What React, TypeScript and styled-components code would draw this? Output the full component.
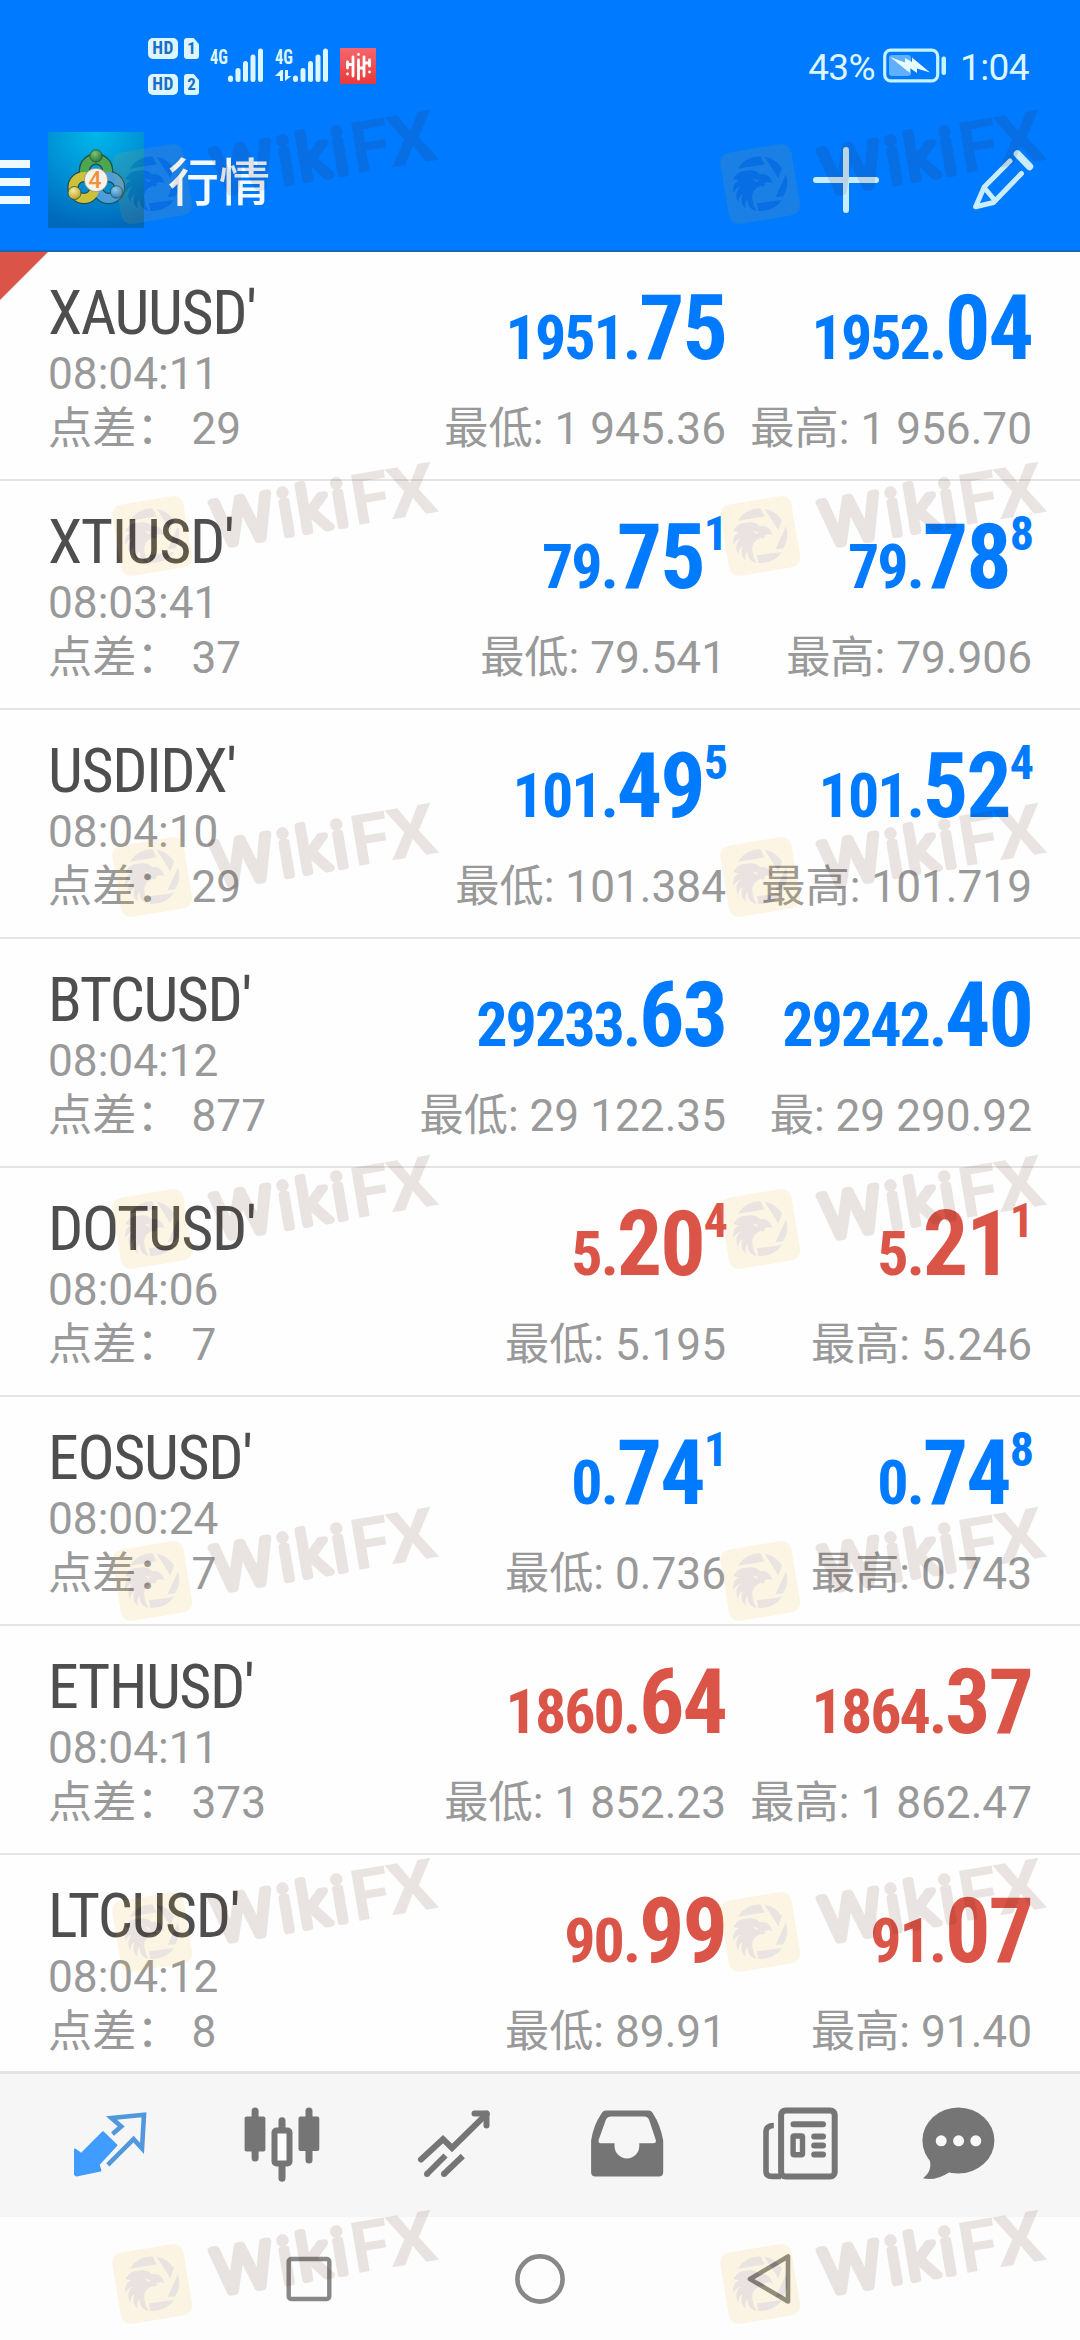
import React from 'react';
import styled, { createGlobalStyle } from 'styled-components';

const BLUE = '#007aff';
const RED = '#da5548';
const ICE = '#dcf6ff';
const GREY = '#757575';

const GlobalStyle = createGlobalStyle`
  * { box-sizing: border-box; }
  body { margin: 0; background: #fdfdfd; }
  svg { display: block; flex: none; }
`;

const Screen = styled.div`
  position: relative;
  width: 1080px;
  height: 2340px;
  overflow: hidden;
  display: flex;
  flex-direction: column;
  background: #fefefe;
  font-family: Roboto, 'Noto Sans CJK SC', sans-serif;
`;

/* ---------- header ---------- */

const Header = styled.header`
  flex: none;
  height: 252px;
  background: ${BLUE};
  border-bottom: 2px solid #1668b8;
`;

const StatusBar = styled.div`
  height: 132px;
  padding: 0 51px 0 148px;
  display: flex;
  align-items: center;
  justify-content: space-between;
  color: ${ICE};
`;

const StatusGroup = styled.div<{ $gap: number }>`
  display: flex;
  align-items: center;
  gap: ${p => p.$gap}px;
`;

const SimList = styled.div`
  display: grid;
  gap: 15px;
  padding-top: 1px;
`;

const SimLine = styled.div`
  display: flex;
  align-items: center;
  gap: 6px;
`;

const HdBadge = styled.span`
  width: 30px;
  height: 21px;
  border-radius: 5px;
  background: ${ICE};
  color: #1a70c4;
  font: 700 17.5px/21px 'Roboto Condensed', Roboto, sans-serif;
  letter-spacing: 0.5px;
  text-align: center;
`;

const SimBadge = styled.span`
  width: 15px;
  height: 21px;
  border-radius: 3px;
  clip-path: polygon(0 0, 65% 0, 100% 30%, 100% 100%, 0 100%);
  background: ${ICE};
  color: #1a70c4;
  font: 700 17px/21px 'Roboto Condensed', Roboto, sans-serif;
  text-align: center;
`;

const StatusText = styled.span<{ $before?: number }>`
  margin-left: ${p => p.$before || 0}px;
  padding-top: 4px;
  font-size: 37px;
  line-height: 44px;
  letter-spacing: -0.6px;
`;

const Toolbar = styled.div`
  height: 96px;
  padding-right: 44px;
  display: flex;
  align-items: center;
`;

const MenuIcon = styled.div`
  width: 30px;
  margin-right: 18px;
  padding-top: 4px;
  display: grid;
  gap: 10px;
`;

const MenuBar = styled.span`
  height: 8px;
  background: #eefaff;
`;

const Title = styled.h1`
  flex: 1;
  margin: 0 0 0 24px;
  padding-top: 8px;
  color: #f4fbff;
  font-size: 51px;
  line-height: 60px;
  font-weight: 500;
`;

const Actions = styled.div`
  display: flex;
  align-items: center;
  gap: 91px;
`;

/* ---------- quotes ---------- */

const QuoteList = styled.main`
  flex: none;
  height: 1819px;
  overflow: hidden;
`;

const Row = styled.section`
  position: relative;
  height: 229px;
  padding: 28px 48px 0;
  display: grid;
  grid-template-columns: 1fr auto 306px;
  border-bottom: 2px solid #e4e4e4;
`;

const Corner = styled.span`
  position: absolute;
  left: 0;
  top: 0;
  width: 48px;
  height: 48px;
  background: ${RED};
  clip-path: polygon(0 0, 100% 0, 0 100%);
`;

const Column = styled.div<{ $end?: boolean }>`
  display: flex;
  flex-direction: column;
  align-items: ${p => (p.$end ? 'flex-end' : 'flex-start')};
`;

const SymbolName = styled.div`
  margin-bottom: 2px;
  color: #4e4e4e;
  font-family: 'Roboto Condensed', Roboto, sans-serif;
  font-size: 62px;
  line-height: 65px;
  letter-spacing: -1.4px;
`;

const Note = styled.div`
  color: #999;
  font-size: 44.2px;
  line-height: 55px;
  white-space: pre;
`;

const Price = styled.div<{ $color: string }>`
  height: 122px;
  padding-top: 1px;
  color: ${p => p.$color};
  font-family: 'Roboto Condensed', Roboto, sans-serif;
  font-weight: 700;
  font-size: 90px;
  line-height: 95px;
  letter-spacing: -0.022em;
  white-space: nowrap;
`;

const Whole = styled.span`
  font-size: 62px;
`;

const Pip = styled.span`
  font-size: 48px;
  line-height: 0;
  vertical-align: 38px;
`;

/* ---------- bottom bars ---------- */

const TabBar = styled.nav`
  flex: none;
  height: 146px;
  padding-left: 24px;
  display: grid;
  grid-template-columns: 172px 171px 173px 173px 175px 139px;
  align-items: center;
  justify-items: center;
  background: #f6f6f6;
  border-top: 3px solid #e2e2e2;
`;

const NavBar = styled.div`
  flex: none;
  height: 123px;
  padding-left: 194px;
  display: grid;
  grid-template-columns: 230px 232px 225px;
  align-items: center;
  justify-items: center;
  background: #fdfdfd;
`;

/* ---------- watermark ---------- */

const MarkLayer = styled.div`
  position: absolute;
  inset: 86px 0 0 100px;
  display: grid;
  grid-template-columns: 608px 340px;
  grid-template-rows: 352px 341px 352px 352px 351px 352px 140px;
  pointer-events: none;
`;

function Mark() {
  return (
    <svg width="340" height="140" viewBox="0 0 340 140" opacity="0.11">
      <rect x="16.2" y="62" width="72" height="72" rx="10" fill="#f0af1e" transform="rotate(-9.5 52.2 98)" />
      <g transform="translate(0 33.7) scale(0.33333)" fill="#461909">
        <path d="M89 147 A82 82 0 0 1 157 110 L170 134 Z" />
        <path d="M170 111 A82 82 0 0 1 222 146 L211 176 Z" />
        <path d="M234 164 A82 82 0 0 1 226 230 L203 232 Z" />
        <path d="M222 241 A82 82 0 0 1 151 274 L147 251 Z" />
        <path d="M76 178 C84 162 98 152 116 153 C134 150 148 154 155 164 C172 160 188 168 193 191 C186 186 178 187 168 190 C174 196 168 202 158 200 C142 204 132 216 133 234 C134 250 138 262 146 274 C126 270 117 254 119 236 C112 246 110 258 114 266 C100 258 97 240 104 222 C94 230 90 240 92 248 C80 234 84 214 98 200 C88 204 80 212 77 220 C72 204 78 190 92 182 Z" />
      </g>
      <path d="M44.5 59.5 L50 61 L49 63.2 Z" transform="translate(0 33)" fill="#f0af1e" />
      <g transform="rotate(-9.5)" fill="#461909" stroke="#461909" fontFamily="Roboto">
        <g fontSize="62" fontWeight="300" strokeWidth="7.5" strokeLinejoin="round" strokeLinecap="round">
          <text x="97.5" y="126" textLength="60" lengthAdjust="spacingAndGlyphs">W</text>
          <text x="164" y="126">i</text>
          <text x="183" y="126">k</text>
          <text x="218.5" y="126">i</text>
        </g>
        <g fontSize="71" fontWeight="700" stroke="none">
          <text x="237" y="128.5">F</text>
          <text x="274" y="128.5" textLength="49" lengthAdjust="spacingAndGlyphs">X</text>
        </g>
      </g>
    </svg>
  );
}

/* ---------- status icons ---------- */

const BARS = [
  [2.5, 29.5],
  [10, 22],
  [17.5, 15],
  [25, 8.5],
  [32.5, 2.5],
];

function Signal({ data }: { data?: boolean }) {
  return (
    <svg width="54" height="36" viewBox="0 0 54 36" fill={ICE}>
      <text x="0" y="16" fontFamily="'Roboto Condensed', Roboto" fontWeight="700" fontSize="20" textLength="18" lengthAdjust="spacingAndGlyphs">
        4G
      </text>
      {BARS.map(([x, y]) => (
        <line key={x} x1={x + 18} x2={x + 18} y1={y + 0.5} y2={31.5} stroke={ICE} strokeWidth="5" strokeLinecap="round" />
      ))}
      {data && <path d="M5 22 V33 H8 V22 H6 L0 28 H5 Z M10 22 V33 L16.5 28 H13 V22 Z" />}
    </svg>
  );
}

function HihIcon() {
  return (
    <svg width="36" height="36" viewBox="0 0 36 36">
      <defs>
        <linearGradient id="hih" x1="0" y1="0" x2="0" y2="1">
          <stop offset="0" stopColor="#f5666c" />
          <stop offset="1" stopColor="#e73a3c" />
        </linearGradient>
      </defs>
      <rect width="36" height="36" fill="url(#hih)" />
      <g stroke="#fff" strokeWidth="2.8" strokeLinecap="round" fill="none">
        <path d="M7.5 14 V20 M7.5 16.5 H13 M13 9 V28 M18.5 6.5 V6.6 M18.5 12 V31 M18.5 20 H24 M24 9 V28 M24 15 H29.5 M29.5 12 V18 M7.5 26 V26.1 M29.5 24 V24.1" />
      </g>
    </svg>
  );
}

function Battery() {
  return (
    <svg width="64" height="36" viewBox="0 0 64 36">
      <rect x="1.7" y="2.2" width="53" height="30.6" rx="6" fill="none" stroke="#c5f4ff" strokeWidth="3.2" />
      <rect x="6" y="7" width="22" height="21" rx="3" fill="#5fb0ff" />
      <path d="M7 9 L22 14.5 V10 L29 14 V9.5 L47 24.5 L34 20.5 V25 L27 20 V25 Z" fill="#e8fbff" />
      <rect x="58.5" y="8.5" width="4.5" height="18.5" rx="2" fill="#c5f4ff" />
    </svg>
  );
}

function AppIcon() {
  return (
    <svg width="96" height="96" viewBox="0 0 96 96">
      <defs>
        <radialGradient id="sky" cx="0.5" cy="0" r="1">
          <stop offset="0" stopColor="#00b8ea" />
          <stop offset="0.55" stopColor="#008fd4" />
          <stop offset="1" stopColor="#0069bb" />
        </radialGradient>
        <radialGradient id="gHead" cx="0.4" cy="0.3" r="0.8">
          <stop offset="0" stopColor="#7cc470" />
          <stop offset="1" stopColor="#1a6e34" />
        </radialGradient>
        <radialGradient id="yHead" cx="0.4" cy="0.3" r="0.8">
          <stop offset="0" stopColor="#f6ee9a" />
          <stop offset="1" stopColor="#b49718" />
        </radialGradient>
        <radialGradient id="bHead" cx="0.4" cy="0.3" r="0.8">
          <stop offset="0" stopColor="#8ccbf5" />
          <stop offset="1" stopColor="#1c74c0" />
        </radialGradient>
      </defs>
      <rect width="96" height="96" fill="url(#sky)" />
      <g fill="none">
        <g stroke="#1c4f4c" strokeWidth="11.5">
          <circle cx="48" cy="38.5" r="11.5" />
          <circle cx="36" cy="55.5" r="11" />
          <circle cx="60.5" cy="55.5" r="11" />
        </g>
        <circle cx="48" cy="38.5" r="11.5" stroke="#4ea651" strokeWidth="9" />
        <circle cx="60.5" cy="55.5" r="11" stroke="#4c9edb" strokeWidth="9" />
        <circle cx="36" cy="55.5" r="11" stroke="#cdc03a" strokeWidth="9" />
      </g>
      <g stroke="#2c4d3a" strokeWidth="0.8">
        <circle cx="48" cy="24" r="6.2" fill="url(#gHead)" />
        <circle cx="26.5" cy="61" r="6.5" fill="url(#yHead)" />
        <circle cx="68.5" cy="60" r="6.2" fill="url(#bHead)" />
      </g>
      <circle cx="48" cy="48" r="11.7" fill="#f6f3ee" stroke="#8b8f6a" strokeWidth="0.8" />
      <text x="47" y="56" textAnchor="middle" fontFamily="Roboto" fontWeight="500" fontSize="23" fill="#f0913c">
        4
      </text>
    </svg>
  );
}

function PlusIcon() {
  return (
    <svg width="66" height="66" viewBox="0 0 66 66" stroke="#c9ecff" strokeWidth="6" strokeLinecap="round">
      <path d="M33 3 V63 M3 33 H63" />
    </svg>
  );
}

function PencilIcon() {
  return (
    <svg width="66" height="64" viewBox="0 0 66 64" fill="none" stroke="#c9ecff" strokeLinecap="round" strokeLinejoin="round">
      <path d="M40 13 L14.2 39 L5.6 58.7 L23.5 54.5 L51.5 25.5" strokeWidth="5" />
      <path d="M14.5 40 L25 52.5" strokeWidth="5" />
      <path d="M47.5 6 L59.5 18.5" strokeWidth="7.5" />
    </svg>
  );
}

/* ---------- tab icons ---------- */

function QuotesIcon() {
  return (
    <svg width="76" height="80" viewBox="0 0 76 80">
      <path d="M3 43.5 L9.3 48 L31 26.2 L44.4 39.2 L26.5 58.5 L28.5 64.5 L4.5 69.5 L3 68.5 Z" fill="#409cff" stroke="#409cff" strokeWidth="2" strokeLinejoin="round" />
      <path d="M40.5 28 L49.2 20.5 L39.5 12 L72 8.8 L70 42.5 L61.6 33.2 L35.8 58.8" fill="none" stroke="#5097dc" strokeWidth="4.6" />
    </svg>
  );
}

function ChartIcon() {
  return (
    <svg width="76" height="80" viewBox="0 0 76 80" fill={GREY}>
      <rect x="7.6" y="1.5" width="7" height="54" rx="3.5" />
      <rect x="0.6" y="10.5" width="20.8" height="35" rx="2" />
      <rect x="61.5" y="1.5" width="7" height="56" rx="3.5" />
      <rect x="54.5" y="10.5" width="20.8" height="34.5" rx="2" />
      <rect x="34.5" y="11.2" width="7" height="14" rx="3.5" />
      <rect x="34.5" y="56" width="7" height="19.7" rx="3.5" />
      <rect x="30.5" y="24.5" width="15" height="33" rx="2" fill="#fdfdfd" stroke={GREY} strokeWidth="6" />
    </svg>
  );
}

function TradeIcon() {
  return (
    <svg width="76" height="80" viewBox="0 0 76 80" fill="none" stroke={GREY} strokeWidth="6">
      <path d="M5 53.5 L27 33.2 L36 42 L70.7 7.8" strokeLinecap="round" />
      <path d="M58.5 7.5 H70.5 V19.5" strokeLinecap="round" strokeLinejoin="round" />
      <path d="M11 68 L29.5 49.5 M28 68 L46.8 50" />
      <path d="M11 68 h0 M28 68 h0" strokeLinecap="round" />
    </svg>
  );
}

function HistoryIcon() {
  return (
    <svg width="76" height="80" viewBox="0 0 76 80" fill={GREY}>
      <path
        fillRule="evenodd"
        d="M17 4.5 H59.5 Q62.5 4.5 64 7.5 Q71.5 19 74.2 34.5 V66 Q74.2 70.5 69.7 70.5 H6.6 Q2.1 70.5 2.1 66 V34.5 Q4.5 19 12.5 7.5 Q14 4.5 17 4.5 Z M22 10.5 Q18.5 10.5 17 13.5 L9.6 34 Q8.8 37.2 12 37.2 H25.5 V40 A12.4 12.4 0 0 0 50.3 40 V37.2 H64 Q67.6 37.2 66.8 34 L60 13.5 Q58.5 10.5 55 10.5 Z"
      />
    </svg>
  );
}

function NewsIcon() {
  return (
    <svg width="76" height="80" viewBox="0 0 76 80" fill="none" stroke={GREY}>
      <rect x="18.1" y="4.4" width="53.6" height="66" rx="4.5" strokeWidth="6" />
      <path d="M10.8 19.5 Q3 19.5 3 26 V65.5 Q3 70.4 9 70.4 H18" strokeWidth="5.6" />
      <g strokeWidth="6" strokeLinecap="round">
        <path d="M30.5 18.2 H60 M51.2 30.5 H60 M51.2 39.5 H60 M51.2 48.5 H60" />
      </g>
      <rect x="30.1" y="30" width="9.4" height="18.8" rx="1" strokeWidth="5.4" />
    </svg>
  );
}

function ChatIcon() {
  return (
    <svg width="76" height="80" viewBox="0 0 76 80" fill={GREY}>
      <ellipse cx="38.4" cy="34.5" rx="36" ry="33" />
      <path d="M9 52 Q13.5 64 3 72.3 Q16 75 29 66.4 L32 55 Z" />
      <g fill="#f9f9f9">
        <circle cx="21.2" cy="34.8" r="5.5" />
        <circle cx="38.6" cy="34.8" r="5.5" />
        <circle cx="55.8" cy="34.8" r="5.5" />
      </g>
    </svg>
  );
}

/* ---------- data ---------- */

type Quote = {
  symbol: string;
  time: string;
  spread: string;
  bid: [string, string, string?];
  ask: [string, string, string?];
  low: string;
  high: string;
  down?: boolean;
};

const QUOTES: Quote[] = [
  { symbol: "XAUUSD'", time: '08:04:11', spread: '29', bid: ['1951.', '75'], ask: ['1952.', '04'], low: '最低: 1 945.36', high: '最高: 1 956.70' },
  { symbol: "XTIUSD'", time: '08:03:41', spread: '37', bid: ['79.', '75', '1'], ask: ['79.', '78', '8'], low: '最低: 79.541', high: '最高: 79.906' },
  { symbol: "USDIDX'", time: '08:04:10', spread: '29', bid: ['101.', '49', '5'], ask: ['101.', '52', '4'], low: '最低: 101.384', high: '最高: 101.719' },
  { symbol: "BTCUSD'", time: '08:04:12', spread: '877', bid: ['29233.', '63'], ask: ['29242.', '40'], low: '最低: 29 122.35', high: '最: 29 290.92' },
  { symbol: "DOTUSD'", time: '08:04:06', spread: '7', bid: ['5.', '20', '4'], ask: ['5.', '21', '1'], low: '最低: 5.195', high: '最高: 5.246', down: true },
  { symbol: "EOSUSD'", time: '08:00:24', spread: '7', bid: ['0.', '74', '1'], ask: ['0.', '74', '8'], low: '最低: 0.736', high: '最高: 0.743' },
  { symbol: "ETHUSD'", time: '08:04:11', spread: '373', bid: ['1860.', '64'], ask: ['1864.', '37'], low: '最低: 1 852.23', high: '最高: 1 862.47', down: true },
  { symbol: "LTCUSD'", time: '08:04:12', spread: '8', bid: ['90.', '99'], ask: ['91.', '07'], low: '最低: 89.91', high: '最高: 91.40', down: true },
];

function PriceColumn({ price, note, color }: { price: [string, string, string?]; note: string; color: string }) {
  const [whole, main, pip] = price;
  return (
    <Column $end>
      <Price $color={color}>
        <Whole>{whole}</Whole>
        {main}
        {pip && <Pip>{pip}</Pip>}
      </Price>
      <Note>{note}</Note>
    </Column>
  );
}

function QuoteRow({ quote, flagged }: { quote: Quote; flagged: boolean }) {
  const color = quote.down ? RED : BLUE;
  return (
    <Row>
      {flagged && <Corner />}
      <Column>
        <SymbolName>{quote.symbol}</SymbolName>
        <Note>{quote.time}</Note>
        <Note>{`点差： ${quote.spread}`}</Note>
      </Column>
      <PriceColumn price={quote.bid} note={quote.low} color={color} />
      <PriceColumn price={quote.ask} note={quote.high} color={color} />
    </Row>
  );
}

export default function App() {
  return (
    <>
      <GlobalStyle />
      <Screen>
        <Header>
          <StatusBar>
            <StatusGroup $gap={11}>
              <SimList>
                {['1', '2'].map(n => (
                  <SimLine key={n}>
                    <HdBadge>HD</HdBadge>
                    <SimBadge>{n}</SimBadge>
                  </SimLine>
                ))}
              </SimList>
              <Signal />
              <Signal data />
              <HihIcon />
            </StatusGroup>
            <StatusGroup $gap={8}>
              <StatusText>43%</StatusText>
              <Battery />
              <StatusText $before={5}>1:04</StatusText>
            </StatusGroup>
          </StatusBar>
          <Toolbar>
            <MenuIcon>
              <MenuBar />
              <MenuBar />
              <MenuBar />
            </MenuIcon>
            <AppIcon />
            <Title>行情</Title>
            <Actions>
              <PlusIcon />
              <PencilIcon />
            </Actions>
          </Toolbar>
        </Header>
        <QuoteList>
          {QUOTES.map((q, i) => (
            <QuoteRow key={q.symbol} quote={q} flagged={i === 0} />
          ))}
        </QuoteList>
        <TabBar>
          <QuotesIcon />
          <ChartIcon />
          <TradeIcon />
          <HistoryIcon />
          <NewsIcon />
          <ChatIcon />
        </TabBar>
        <NavBar>
          <svg width="46" height="46" viewBox="0 0 46 46" fill="none" stroke="#888" strokeWidth="4.4">
            <rect x="2.7" y="3" width="40.6" height="40" rx="2.5" />
          </svg>
          <svg width="50" height="50" viewBox="0 0 50 50" fill="none" stroke="#888" strokeWidth="4.6">
            <circle cx="25" cy="25" r="22.6" />
          </svg>
          <svg width="46" height="52" viewBox="0 0 46 52" fill="none" stroke="#888" strokeWidth="4.6" strokeLinejoin="round">
            <path d="M42 3.5 V48.5 L4 26 Z" />
          </svg>
        </NavBar>
        <MarkLayer>
          {Array.from({ length: 14 }, (_, i) => (
            <Mark key={i} />
          ))}
        </MarkLayer>
      </Screen>
    </>
  );
}
